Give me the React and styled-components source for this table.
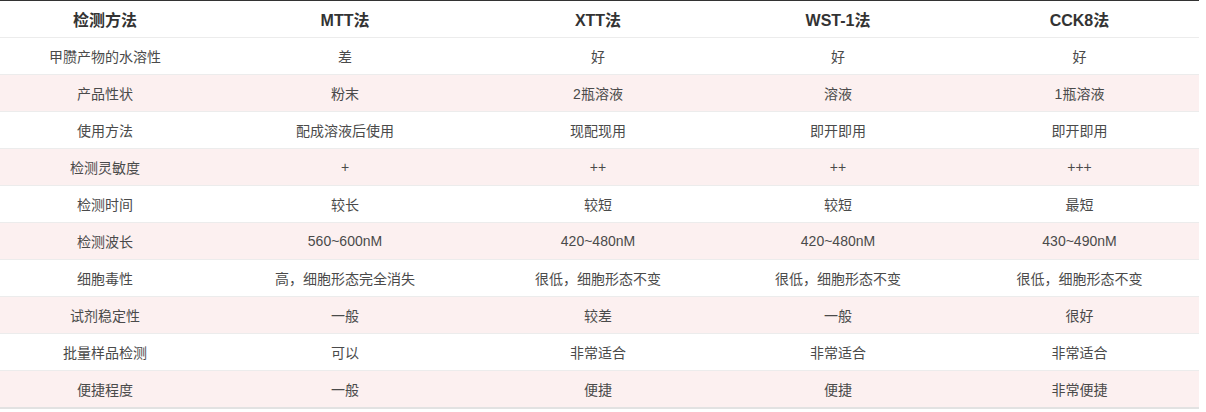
import React from "react";
import styled, { createGlobalStyle } from "styled-components";

const GlobalStyle = createGlobalStyle`
  body {
    margin: 0;
    background: #fff;
    font-family: "Liberation Sans", "Noto Sans CJK SC", sans-serif;
  }
`;

const columns = ["检测方法", "MTT法", "XTT法", "WST-1法", "CCK8法"];
const widths = [210, 270, 236, 244, 239];

const rows = [
  ["甲臜产物的水溶性", "差", "好", "好", "好"],
  ["产品性状", "粉末", "2瓶溶液", "溶液", "1瓶溶液"],
  ["使用方法", "配成溶液后使用", "现配现用", "即开即用", "即开即用"],
  ["检测灵敏度", "+", "++", "++", "+++"],
  ["检测时间", "较长", "较短", "较短", "最短"],
  ["检测波长", "560~600nM", "420~480nM", "420~480nM", "430~490nM"],
  ["细胞毒性", "高，细胞形态完全消失", "很低，细胞形态不变", "很低，细胞形态不变", "很低，细胞形态不变"],
  ["试剂稳定性", "一般", "较差", "一般", "很好"],
  ["批量样品检测", "可以", "非常适合", "非常适合", "非常适合"],
  ["便捷程度", "一般", "便捷", "便捷", "非常便捷"],
];

const Table = styled.table`
  width: 1199px;
  border-collapse: collapse;
  table-layout: fixed;
  border-top: 1px solid #333;
  border-bottom: 2px solid #e2e2e2;
`;

const HeadCell = styled.th`
  height: 36px;
  padding: 0;
  text-align: center;
  font-size: 16px;
  font-weight: bold;
  color: #333;
  border-bottom: 1px solid #ececec;
`;

const Row = styled.tr`
  background: ${(p) => (p.$shaded ? "#fcf0f0" : "#fff")};
`;

const Cell = styled.td`
  height: 36px;
  padding: 0;
  text-align: center;
  font-size: 14px;
  color: #4a4a4a;
  border-bottom: 1px solid #ececec;
`;

export default function App() {
  return (
    <>
      <GlobalStyle />
      <Table>
        <colgroup>
          {widths.map((w, i) => (
            <col key={i} style={{ width: w }} />
          ))}
        </colgroup>
        <thead>
          <tr>
            {columns.map((c) => (
              <HeadCell key={c}>{c}</HeadCell>
            ))}
          </tr>
        </thead>
        <tbody>
          {rows.map((r, i) => (
            <Row key={i} $shaded={i % 2 === 1}>
              {r.map((v, j) => (
                <Cell key={j}>{v}</Cell>
              ))}
            </Row>
          ))}
        </tbody>
      </Table>
    </>
  );
}
